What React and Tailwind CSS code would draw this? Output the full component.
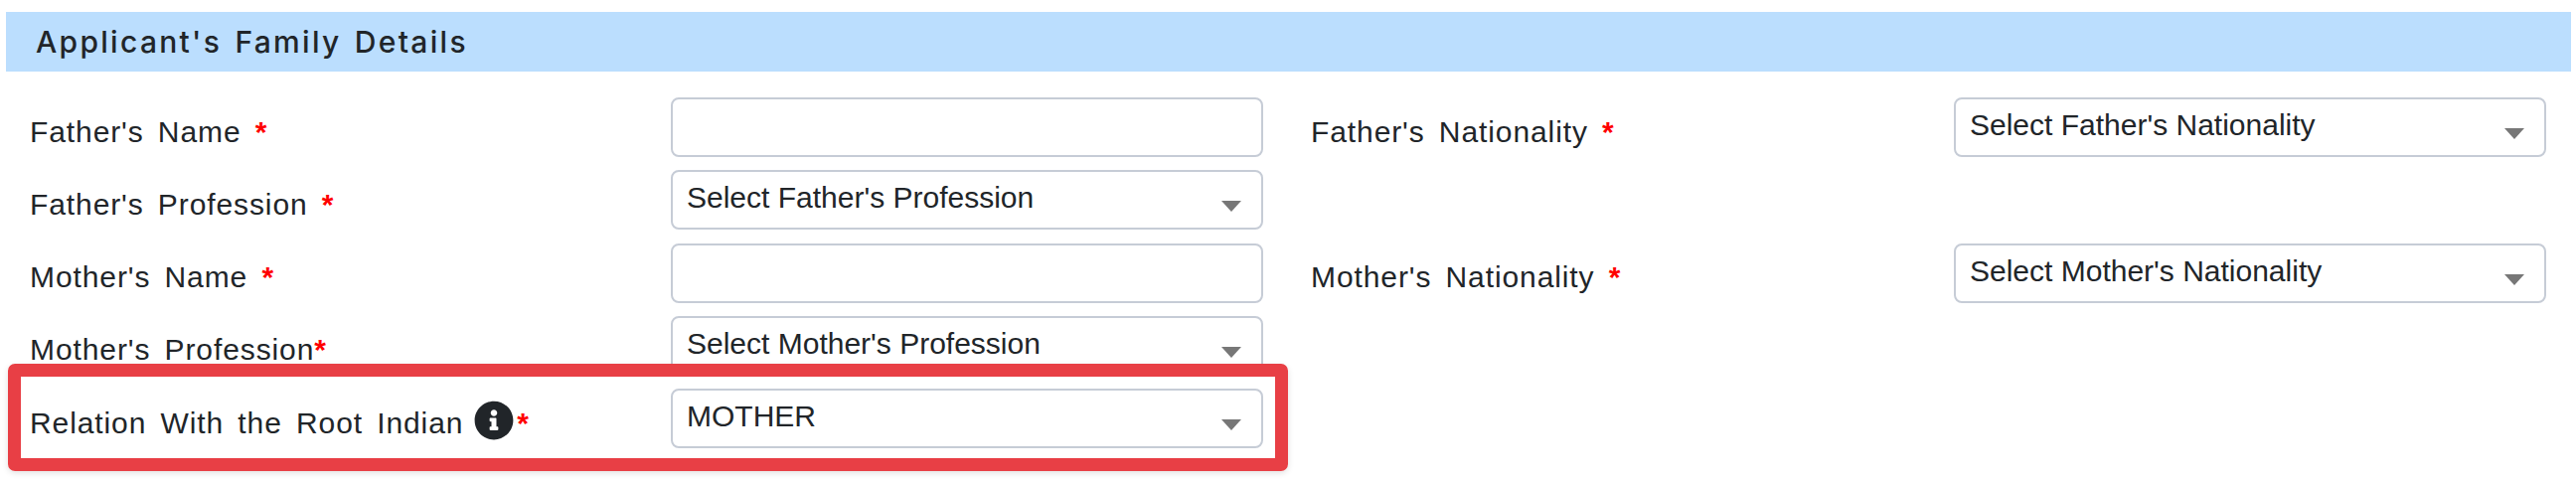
import React from "react";
import { FaInfoCircle } from "react-icons/fa";

const Star = ({ className = "" }) => <span className={`font-bold text-[#ff0000] ${className}`}>*</span>;

function Label({ children, className = "" }) {
  return (
    <div className={`flex items-center h-[60px] pt-[9px] text-[30px] leading-none tracking-[0.9px] [word-spacing:5px] text-[#212529] whitespace-pre ${className}`}>
      {children}
    </div>
  );
}

function Field({ value, select }) {
  if (!select) {
    return <input className="block w-[596px] h-[60px] rounded-[8px] border-2 border-[#c6ccd6] bg-white" />;
  }
  return (
    <div className="relative flex w-[596px] h-[60px] items-center rounded-[8px] border-2 border-[#c6ccd6] bg-white pl-[14px] pb-[4px] text-[30px] leading-none text-[#212529]">
      {value}
      <svg className="absolute right-[20px] top-[29px]" width="20" height="11" viewBox="0 0 20 11">
        <polygon points="0,0 20,0 10,11" fill="#777777" />
      </svg>
    </div>
  );
}

function Row({ left, value, right, rightValue }) {
  return (
    <div className="flex">
      <div className="w-[675px] pl-[30px]">{left}</div>
      <Field select={!!value} value={value} />
      <div className="w-[695px] pl-[48px]">{right}</div>
      {right && <Field select value={rightValue} />}
    </div>
  );
}

export default function App() {
  return (
    <div className="relative h-[486px] w-[2592px] overflow-hidden bg-white font-['Liberation_Sans',sans-serif]">
      <div className="pt-[12px] pl-[6px]">
        <div className="flex h-[60px] w-[2581px] items-center bg-[#bbdefe] pl-[30px] font-['Inter',sans-serif] text-[30px] font-medium tracking-[2.3px] [word-spacing:3px] text-[#212529]">
          Applicant's Family Details
        </div>
      </div>
      <div className="mt-[26px] flex flex-col gap-[13.25px]">
        <Row
          left={<Label>Father's Name <Star /></Label>}
          right={<Label>Father's Nationality <Star /></Label>}
          rightValue="Select Father's Nationality"
        />
        <Row left={<Label>Father's Profession <Star /></Label>} value="Select Father's Profession" />
        <Row
          left={<Label>Mother's Name <Star /></Label>}
          right={<Label>Mother's Nationality <Star /></Label>}
          rightValue="Select Mother's Nationality"
        />
        <Row left={<Label>Mother's Profession<Star /></Label>} value="Select Mother's Profession" />
        <Row
          left={
            <Label>
              Relation With the Root Indian
              <FaInfoCircle className="ml-[11px] mb-[5px] text-[#212529]" size={40} />
              <Star className="ml-[3px]" />
            </Label>
          }
          value="MOTHER"
        />
      </div>
      <div className="pointer-events-none absolute left-[8px] top-[366px] h-[108px] w-[1288px] rounded-[7px] border-[13px] border-[#e83f45] shadow-[0_2px_6px_rgba(0,0,0,0.12)]" />
    </div>
  );
}
